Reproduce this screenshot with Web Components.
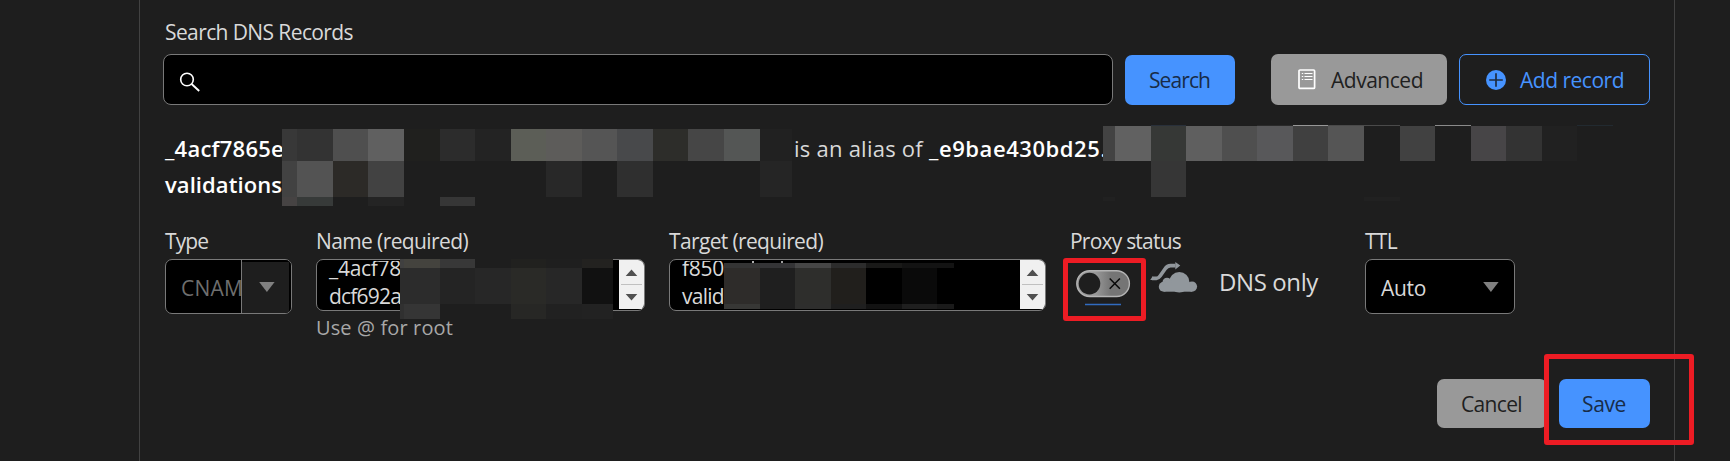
<!DOCTYPE html>
<html lang="en">
<head>
<meta charset="utf-8">
<title>DNS records</title>
<style>
html,body{margin:0;height:461px;overflow:hidden;background:#1e1e1e}
body{font-family:"Open Sans","Noto Sans",sans-serif;color:#d9d9d9}
</style>
</head>
<body>
<dns-page></dns-page>
<script>
const define = (name, html, init) => customElements.define(name, class extends HTMLElement {
  constructor() {
    super();
    const t = document.createElement('template');
    t.innerHTML = html;
    this.attachShadow({mode: 'open'}).append(t.content.cloneNode(true));
  }
  connectedCallback() { if (init) init(this, this.shadowRoot); }
});

/* One line of text tracked to a given measure. */
define('ui-text', `<style>
:host{display:block;flex:none;white-space:pre;font-size:var(--fs,21px);line-height:var(--lh,28px);height:var(--lh,28px)}
span{display:inline-block}
</style><span><slot></slot></span>`, (el, root) => {
  const w = +el.getAttribute('w'), s = root.querySelector('span');
  if (!w) return;
  el.style.width = w + 'px';
  const n = el.textContent.length;
  s.style.letterSpacing = ((w - s.getBoundingClientRect().width) / n) + 'px';
});

define('ui-button', `<style>
:host{display:flex;flex:none;box-sizing:border-box;align-items:center;border-radius:7px;background:#999;color:#1f1f1f;--fs:21px}
:host([kind=primary]){background:#4693ff;color:#182c48}
:host([kind=outline]){background:none;border:1px solid #4693ff;color:#4693ff}
</style><slot></slot>`);

define('ui-icon', `<style>:host{display:block;flex:none}svg{display:block}</style>`, (el, root) => {
  const icons = {
    search: `<svg width="22" height="20" viewBox="0 0 22 20" fill="none" stroke="#fff" stroke-width="1.6"><circle cx="8" cy="7.5" r="6.3"/><path d="M12.6 12l7.600 7" stroke-width="1.9"/></svg>`,
    list: `<svg width="18" height="21" viewBox="0 0 18 21" fill="none" stroke="#fff"><rect x="1" y="1" width="15.6" height="18.4" rx="1" stroke-width="1.7"/><path d="M6.5 4.5h8M6.5 7.500h8M6.5 10.500h8" stroke-width="1.2"/><path d="M3.8 4.5h1.4M3.8 7.500h1.4M3.8 10.500h1.4" stroke-width="1.2"/></svg>`,
    plus: `<svg width="20" height="20" viewBox="0 0 20 20"><circle cx="10" cy="10" r="10" fill="#4693ff"/><path d="M10 3.2v13.6M3.2 10h13.6" stroke="#1e2c42" stroke-width="1.7"/></svg>`,
    caret: `<svg width="16" height="10" viewBox="0 0 16 10"><path d="M.2 0h15.4L7.9 9.9z" fill="#808080"/></svg>`,
    cloud: `<svg width="48" height="32" viewBox="0 0 48 32" fill="#91979c"><path d="M2 17.300h4.500c1.800 0 2.500-.8 3.600-2.300l4.900-7c1.500-2.200 3-3.300 5.500-3.300h5" fill="none" stroke="#91979c" stroke-width="3.700"/><path d="M25.300 .9l5 3.600-5 3.900zM2.500 15.500L.2 19.100h2.300z"/><circle cx="29.300" cy="21.300" r="11.400" fill="#1e1e1e"/><circle cx="17" cy="21" r="5.300" fill="#1e1e1e"/><circle cx="29.300" cy="21.300" r="10.200"/><circle cx="17" cy="21.300" r="4.500"/><circle cx="13.800" cy="25.700" r="5"/><circle cx="42" cy="25.600" r="5.100"/><path d="M13.800 21.500H42v9.200H13.800z"/></svg>`
  };
  root.innerHTML += icons[el.getAttribute('name')];
});

define('search-input', `<style>
:host{display:flex;flex:none;box-sizing:border-box;width:950px;height:51px;border:1px solid #797979;border-radius:8px;background:#000;padding:17px 0 0 15px}
</style><ui-icon name="search"></ui-icon>`);

define('form-field', `<style>
:host{display:flex;flex-direction:column;flex:none;gap:4px}
</style><slot name="label"></slot><slot></slot>`);

define('ui-select', `<style>
:host{display:flex;box-sizing:border-box;height:55px;border:1px solid #797979;border-radius:7px;background:#000;overflow:hidden}
.v{flex:1;overflow:hidden;padding:14px 0 0 15px;color:#d9d9d9}
.c{width:31px;padding-top:22px}
:host([disabled]) .v{color:#6e6e6e}
:host([disabled]) .c{box-sizing:border-box;width:50px;padding-left:17px;background:#1e1e1e;border-left:1px solid #797979;box-shadow:inset -2px 2px 0 #000}
</style><div class="v"><slot></slot></div><div class="c"><ui-icon name="caret"></ui-icon></div>`);

define('spin-area', `<style>
:host{display:flex;box-sizing:border-box;height:52px;border:1px solid #797979;border-radius:7px;background:#000;overflow:hidden}
.t{flex:1;overflow:hidden;margin-top:1px;height:48px}
.in{margin-top:-7px;padding-left:12px}
.s{width:25px;height:49px;background:#f0f0f0;display:flex}
svg{display:block}
</style><div class="t"><div class="in"><slot></slot></div></div>
<div class="s"><svg width="25" height="49"><path d="M12.500 9.500l5.800 6.500H6.700zM12.500 40.500l5.800-6.500H6.700z" fill="#505050"/><path d="M2 24.500h21" stroke="#c0c0c0"/></svg></div>`);

define('proxy-toggle', `<style>:host{display:block;flex:none}svg{display:block}</style>
<svg width="56" height="40" viewBox="0 0 56 40"><defs><linearGradient id="g"><stop offset=".35" stop-color="#999"/><stop offset=".65" stop-color="#757575"/></linearGradient></defs>
<rect x=".8" y=".8" width="52.600" height="25.700" rx="12.850" fill="url(#g)" stroke="#b4b4b4" stroke-width="1.400"/>
<circle cx="13.500" cy="13.600" r="10.800" fill="#1e1e1e"/><path d="M33.700 8.500l10.200 10.200M43.900 8.500L33.700 18.700" stroke="#080808" stroke-width="1.500"/>
<path d="M9 34.500h36" stroke="#316bc0" stroke-width="1.300"/></svg>`);

/* Censor tiles and highlight frames lie over the form. */
define('pixel-mask', `<style>:host{position:absolute;left:0;top:0;pointer-events:none}svg{display:block}</style><svg width="1730" height="461" shape-rendering="crispEdges"></svg>`, (el, root) => {
  const rows = [
    [129,161,'282:383838 297:333333 333:4f4f4f 368:606060 404:20201e 440:2c2c2c 475:232323 511:5c5e57 546:5d5c5a 582:555555 617:48494b 653:2d2d2a 688:464646 724:545655 760:212121 792'],
    [161,197,'282:424242 297:535353 333:2c2a27 368:424242 404:- 546:282828 582:- 617:2f2f2f 653:- 760:252525 792'],
    [197,206,'282:464343 297:373a39 333:- 368:242424 404:- 440:363636 475'],
    [125,126,'1151:29303a 1186:- 1257:2a2a2a 1293:979797 1328:4a4a4a 1400:- 1435:8a8a8a 1471:- 1577:222a30 1613'],
    [126,161,'1103:434343 1115:616161 1151:363836 1186:5f5f5f 1222:4f4f4f 1257:58585a 1293:404040 1328:555555 1364:- 1400:414141 1435:- 1471:474547 1506:333333 1542:212121 1577'],
    [161,197,'1151:363636 1186'],
    [197,201,'1103:212121 1115:- 1364:212121 1400'],
    [259,268,'400:404040 404:44433e 440:383838 475:1e1e1e 511:21211f 546:1f1f1f 582:232220 613'],
    [268,304,'400:2c2c2c 440:242424 475:272727 511:2a2a27 546:272727 582:111111 613'],
    [304,319,'400:303030 404:353535 440:1e1e1e 511:272725 546:212121 582:222222 613'],
    [261,263,'752:b0b0b0 754:- 781:a0a0a0 783'],
    [263,268,'724:343434 760:343436 795:464646 831:2c2c2c 866:191918 902:131313 954'],
    [268,304,'724:2e2c2a 760:1f1f1f 795:2e2e2c 831:211f1c 866:000000 902:0a0a0a 937:000000 954'],
    [304,309,'724:373735 760:1f1f1f 795:2e2e2d 831:1f1f1f 866:121212 902:1f1f1f 937:1a1a1a 954']
  ];
  let out = '';
  for (const [y0, y1, spec] of rows) {
    const c = spec.split(' ').map(s => s.split(':'));
    for (let i = 0; i < c.length - 1; i++)
      if (c[i][1] !== '-') out += `<rect x="${c[i][0]}" y="${y0}" width="${c[i + 1][0] - c[i][0]}" height="${y1 - y0}" fill="#${c[i][1]}"/>`;
  }
  root.querySelector('svg').innerHTML = out;
});

define('mark-frame', `<style>:host{position:absolute;box-sizing:border-box;border:5px solid #ed1c24;border-radius:3px}</style>`);

define('dns-page', `<style>
:host{display:block;position:relative;width:1730px;height:461px;overflow:hidden}
.panel{box-sizing:border-box;width:1536px;height:461px;margin-left:139px;border:solid #424242;border-width:0 1px;padding:18px 0 0 23px}
.row{display:flex;align-items:flex-start}
.lbl{margin-left:2px}
.bar{margin-top:8px}
.para{margin:25px 0 0 2px;--fs:22px;--lh:36px}
.para ui-text.b{font-weight:600;color:#fff}
.fields{margin:25px 0 0 2px}
.actions{margin-top:38px;margin-left:1274px;gap:12px}
.help{--fs:20px;--lh:26px;color:#a8a8a8}
</style>
<div class="panel">
<ui-text class="lbl" w="188">Search DNS Records</ui-text>
<div class="row bar">
<search-input></search-input>
<ui-button kind="primary" style="width:110px;height:50px;margin:1px 0 0 12px;padding-left:24px"><ui-text w="61">Search</ui-text></ui-button>
<ui-button style="width:176px;height:51px;margin-left:36px;padding-left:27px;gap:15px"><ui-icon name="list"></ui-icon><ui-text w="92">Advanced</ui-text></ui-button>
<ui-button kind="outline" style="width:191px;height:51px;margin-left:12px;padding-left:26px;gap:14px"><ui-icon name="plus"></ui-icon><ui-text w="104">Add record</ui-text></ui-button>
</div>
<div class="para">
<div class="row"><ui-text class="b" w="119" style="margin-right:510px">_4acf7865e</ui-text><ui-text w="129" style="margin-right:6px">is an alias of</ui-text><ui-text class="b" w="178">_e9bae430bd25.</ui-text></div>
<div class="row"><ui-text class="b" w="117">validations</ui-text></div>
</div>
<div class="row fields">
<form-field style="width:127px;margin-right:24px"><ui-text slot="label" w="43">Type</ui-text><ui-select disabled><ui-text w="74">CNAME</ui-text></ui-select></form-field>
<form-field style="width:329px;margin-right:24px"><ui-text slot="label" w="152">Name (required)</ui-text><spin-area><ui-text w="72">_4acf78</ui-text><ui-text w="72">dcf692a</ui-text></spin-area><ui-text class="help" w="137">Use @ for root</ui-text></form-field>
<form-field style="width:377px;margin-right:24px"><ui-text slot="label" w="154">Target (required)</ui-text><spin-area><ui-text w="42">f850</ui-text><ui-text w="42">valid</ui-text></spin-area></form-field>
<form-field style="width:271px;margin-right:24px"><ui-text slot="label" w="111">Proxy status</ui-text>
<div class="row" style="padding:2px 0 0 6px"><proxy-toggle style="margin-top:9px"></proxy-toggle><ui-icon name="cloud" style="margin-left:18px"></ui-icon><ui-text w="99" style="--fs:24px;--lh:32px;margin:5px 0 0 21px">DNS only</ui-text></div></form-field>
<form-field style="width:150px"><ui-text slot="label" w="32">TTL</ui-text><ui-select><ui-text w="45">Auto</ui-text></ui-select></form-field>
</div>
<div class="row actions">
<ui-button style="width:110px;height:49px;padding-left:24px"><ui-text w="61">Cancel</ui-text></ui-button>
<ui-button kind="primary" style="width:91px;height:49px;padding-left:23px"><ui-text w="44">Save</ui-text></ui-button>
</div>
</div>
<pixel-mask></pixel-mask>
<mark-frame style="left:1063px;top:258px;width:83px;height:63px"></mark-frame>
<mark-frame style="left:1544px;top:354px;width:150px;height:91px"></mark-frame>`);
</script>
</body>
</html>
